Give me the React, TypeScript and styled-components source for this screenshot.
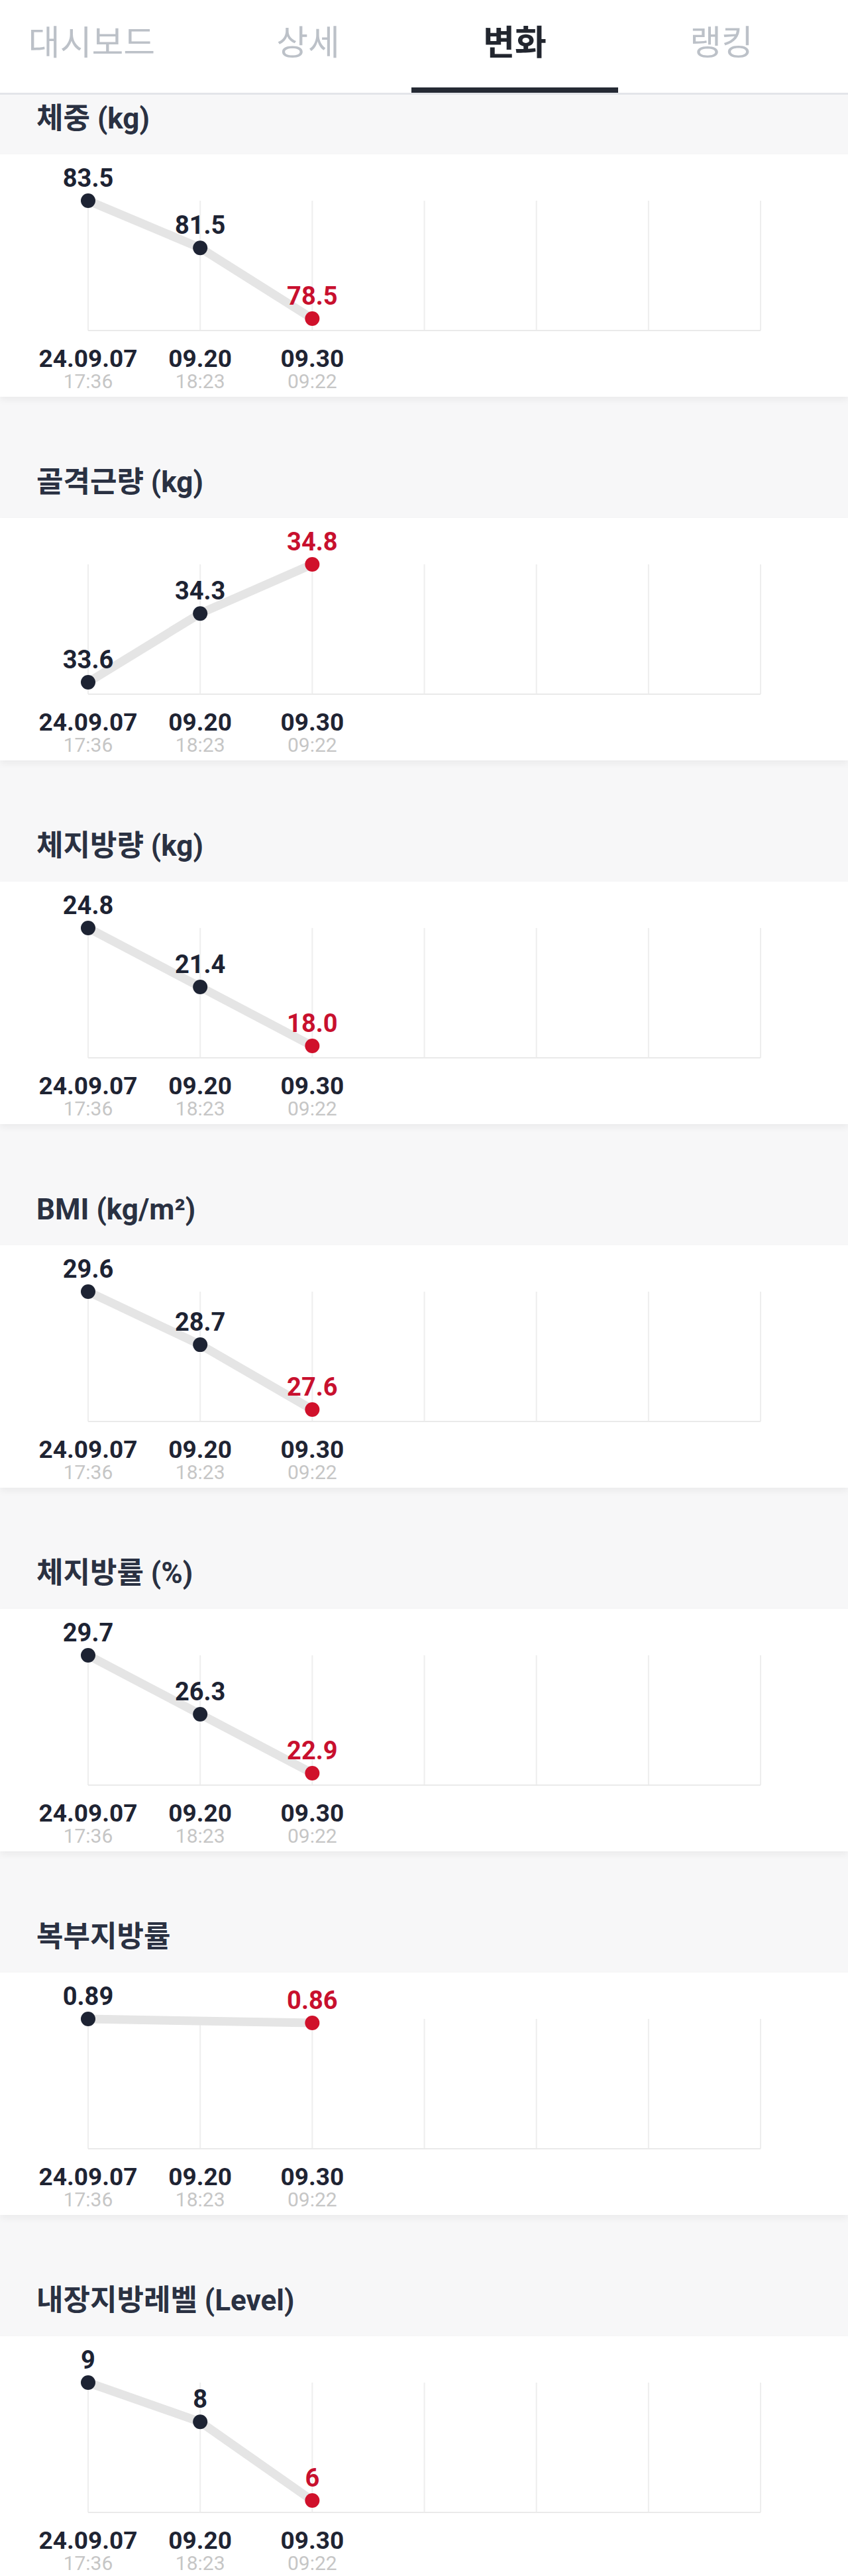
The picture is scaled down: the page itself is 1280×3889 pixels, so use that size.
import React from 'react';
import styled, { createGlobalStyle } from 'styled-components';

const GlobalStyle = createGlobalStyle`
  html, body {
    margin: 0;
    padding: 0;
    background: #f7f7f8;
  }
  body {
    font-family: Roboto, "Noto Sans CJK KR", sans-serif;
    -webkit-font-smoothing: antialiased;
  }
`;

const X0 = 133;
const STEP = 169.17;
const TOP = 70;
const SPAN = 178;
const AXIS_Y = 266;
const COLS = 7;

const Page = styled.div`
  width: 1280px;
  background: #f7f7f8;
`;

const TabBar = styled.nav`
  display: grid;
  grid-template-columns: 309px 312px 312px 312px;
  height: 143px;
  box-sizing: border-box;
  background: #ffffff;
  border-bottom: 3px solid #e3e5e9;
  position: relative;
  z-index: 2;
`;

const Tab = styled.div<{ $active?: boolean; $padRight?: number }>`
  display: flex;
  justify-content: center;
  align-items: flex-start;
  box-sizing: border-box;
  padding-top: 35px;
  padding-right: ${(p) => p.$padRight ?? 0}px;
  font-family: "Noto Sans CJK KR", sans-serif;
  font-size: 52px;
  line-height: 52px;
  font-weight: ${(p) => (p.$active ? 700 : 400)};
  color: ${(p) => (p.$active ? '#22262f' : '#bcc1c8')};
  border-bottom: 8px solid ${(p) => (p.$active ? '#252a34' : 'transparent')};
`;

const Section = styled.section`
  display: flex;
  flex-direction: column;
`;

const SectionHeader = styled.h2<{ $compact?: boolean }>`
  margin: 0;
  height: ${(p) => (p.$compact ? 90 : 183)}px;
  box-sizing: border-box;
  display: flex;
  align-items: flex-end;
  padding: 0 0 30px 55px;
  font-family: Roboto, "Noto Sans CJK KR", sans-serif;
  font-size: 44px;
  line-height: 48px;
  font-weight: 700;
  color: #2a3142;
  background: #f7f7f8;
`;

const Card = styled.div`
  position: relative;
  z-index: 1;
  height: 366px;
  background: #ffffff;
  box-shadow: 0 5px 10px rgba(0, 0, 0, 0.05);
  display: flex;
  flex-direction: column;
`;

const ChartSvg = styled.svg`
  display: block;
  width: 1280px;
  height: 290px;
  flex: none;
`;

const AxisRow = styled.div`
  display: grid;
  grid-template-columns: repeat(${COLS}, ${STEP}px);
  padding-left: ${X0 - STEP / 2}px;
`;

const AxisCell = styled.div`
  display: flex;
  flex-direction: column;
  align-items: center;
  white-space: nowrap;
`;

const DateText = styled.span`
  font-family: Roboto, sans-serif;
  font-size: 37px;
  line-height: 37px;
  font-weight: 700;
  color: #1f2433;
`;

const TimeText = styled.span`
  font-family: Roboto, sans-serif;
  font-size: 30px;
  line-height: 32px;
  font-weight: 400;
  color: #c6c6c6;
`;

type Metric = {
  title: string;
  values: (string | null)[];
};

const metrics: Metric[] = [
  { title: '체중 (kg)', values: ['83.5', '81.5', '78.5'] },
  { title: '골격근량 (kg)', values: ['33.6', '34.3', '34.8'] },
  { title: '체지방량 (kg)', values: ['24.8', '21.4', '18.0'] },
  { title: 'BMI (kg/m²)', values: ['29.6', '28.7', '27.6'] },
  { title: '체지방률 (%)', values: ['29.7', '26.3', '22.9'] },
  { title: '복부지방률', values: ['0.89', null, '0.86'] },
  { title: '내장지방레벨 (Level)', values: ['9', '8', '6'] },
];

const dates = [
  { date: '24.09.07', time: '17:36' },
  { date: '09.20', time: '18:23' },
  { date: '09.30', time: '09:22' },
];

const DARK = '#1d2333';
const RED = '#c8102e';
const RED_DOT = '#d0112b';

function Chart({ values }: { values: (string | null)[] }) {
  const nums = values.map((v) => (v == null ? 0 : parseFloat(v)));
  const max = Math.max(...nums);
  const min = Math.min(...nums);
  const range = max - min || 1;
  const pts = values
    .map((v, i) =>
      v == null
        ? null
        : { x: X0 + i * STEP, y: TOP + ((max - parseFloat(v)) / range) * SPAN, label: v }
    )
    .filter((p): p is { x: number; y: number; label: string } => p !== null);
  const lastIdx = pts.length - 1;
  const xEnd = X0 + (COLS - 1) * STEP;

  return (
    <ChartSvg viewBox="0 0 1280 290">
      {Array.from({ length: COLS }).map((_, i) => (
        <line
          key={i}
          x1={X0 + i * STEP}
          x2={X0 + i * STEP}
          y1={TOP}
          y2={AXIS_Y}
          stroke="#eeeeee"
          strokeWidth={2}
        />
      ))}
      <line x1={X0} x2={xEnd} y1={AXIS_Y} y2={AXIS_Y} stroke="#eaeaea" strokeWidth={2} />
      <polyline
        points={pts.map((p) => `${p.x},${p.y}`).join(' ')}
        fill="none"
        stroke="#e5e5e5"
        strokeWidth={13}
        strokeLinejoin="round"
        strokeLinecap="round"
      />
      {pts.map((p, i) => (
        <g key={i}>
          <circle cx={p.x} cy={p.y} r={11} fill={i === lastIdx ? RED_DOT : DARK} />
          <text
            x={p.x}
            y={p.y - 21}
            textAnchor="middle"
            fontFamily="Roboto, sans-serif"
            fontSize={38}
            fontWeight={700}
            fill={i === lastIdx ? RED : DARK}
          >
            {p.label}
          </text>
        </g>
      ))}
    </ChartSvg>
  );
}

export default function App() {
  return (
    <Page>
      <GlobalStyle />
      <TabBar>
        <Tab $padRight={32}>대시보드</Tab>
        <Tab>상세</Tab>
        <Tab $active>변화</Tab>
        <Tab>랭킹</Tab>
      </TabBar>
      {metrics.map((m, idx) => (
        <Section key={m.title}>
          <SectionHeader $compact={idx === 0}>{m.title}</SectionHeader>
          <Card>
            <Chart values={m.values} />
            <AxisRow>
              {dates.map((d) => (
                <AxisCell key={d.date}>
                  <DateText>{d.date}</DateText>
                  <TimeText>{d.time}</TimeText>
                </AxisCell>
              ))}
            </AxisRow>
          </Card>
        </Section>
      ))}
    </Page>
  );
}
